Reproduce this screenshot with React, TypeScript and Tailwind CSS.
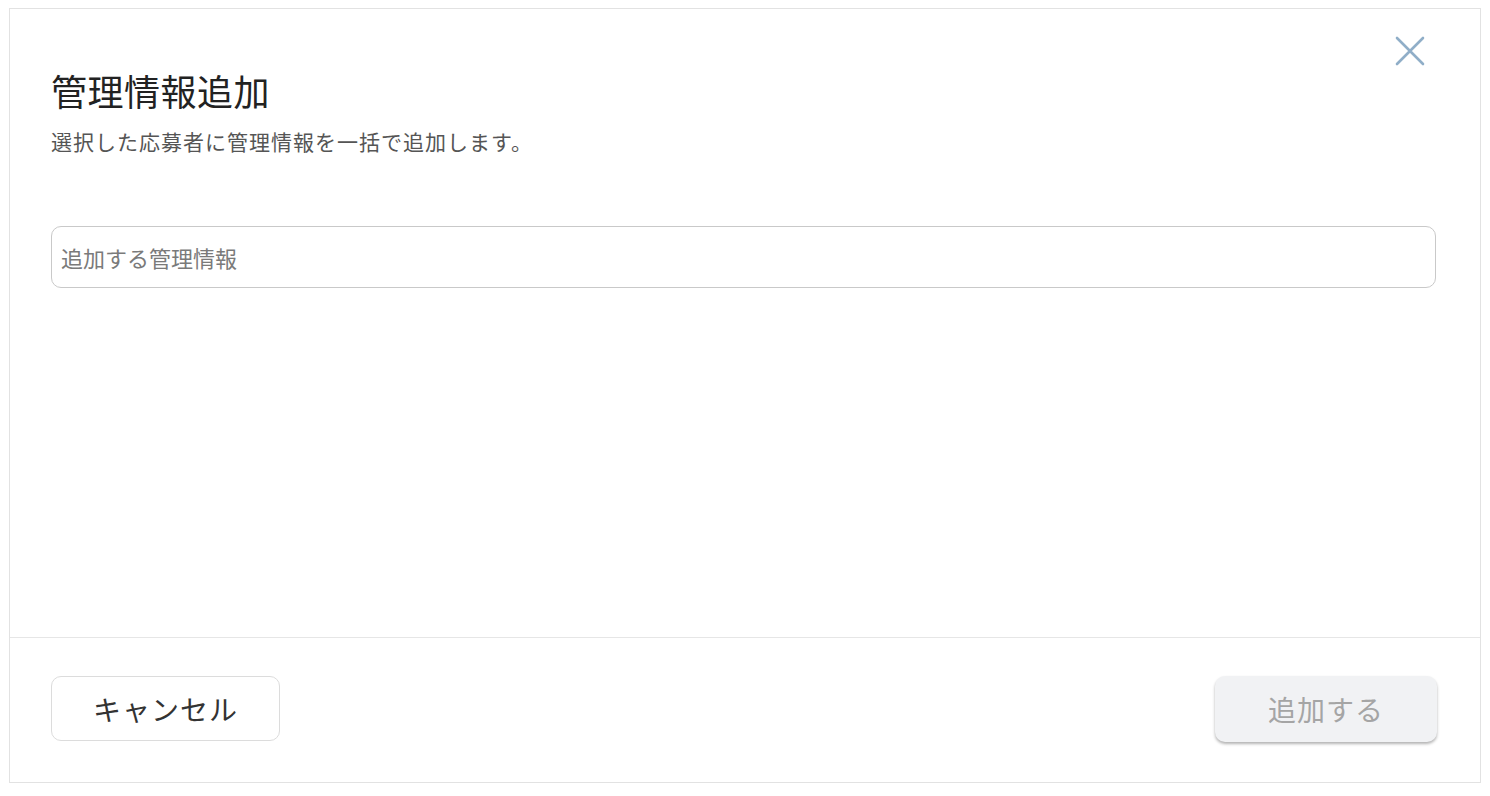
import React from "react";

const font = {
    fontFamily: '"Noto Sans CJK JP", "Noto Sans", sans-serif',
};

const CloseIcon = () => (
    <svg width="30" height="30" viewBox="0 0 30 30" fill="none">
        <path
            d="M2 2 L28 28 M28 2 L2 28"
            stroke="#90aec8"
            strokeWidth="2.6"
            strokeLinecap="round"
        />
    </svg>
);

const AddInfoDialog = () => {
    return (
        <div
            className="relative flex h-[775px] w-[1472px] flex-col border border-[#e2e2e2] bg-white"
            style={font}
        >
            <button className="absolute top-[27px] right-[55px] p-0">
                <CloseIcon />
            </button>
            <div className="flex-1 pt-[59px] pl-[41px] pr-[44px]">
                <h2 className="text-[36px] leading-[44px] tracking-[0.5px] text-[#222]">
                    管理情報追加
                </h2>
                <p className="mt-[15px] text-[21px] leading-[28px] tracking-[1px] text-[#555]">
                    選択した応募者に管理情報を一括で追加します。
                </p>
                <input
                    className="mt-[71px] h-[62px] w-full rounded-[10px] border border-[#c9c9c9] px-[9px] text-[22px] placeholder:text-[#7a7a7a] outline-none"
                    placeholder="追加する管理情報"
                    style={font}
                />
            </div>
            <div className="flex h-[145px] items-center justify-between border-t border-[#e6e6e6] pb-[3px] pl-[41px] pr-[43px]">
                <button className="h-[65px] w-[229px] rounded-[10px] border border-[#dcdcdc] bg-white text-[28px] tracking-[1px] text-[#333]">
                    キャンセル
                </button>
                <button
                    disabled
                    className="h-[66px] w-[222px] rounded-[10px] bg-[#f1f2f4] text-[28px] tracking-[1px] text-[#a5a5a5] shadow-[0_2px_3px_rgba(0,0,0,0.3)]"
                >
                    追加する
                </button>
            </div>
        </div>
    );
};

export default function App() {
    return (
        <div className="min-h-screen bg-white pt-[8px] pl-[9px]">
            <AddInfoDialog />
        </div>
    );
}
